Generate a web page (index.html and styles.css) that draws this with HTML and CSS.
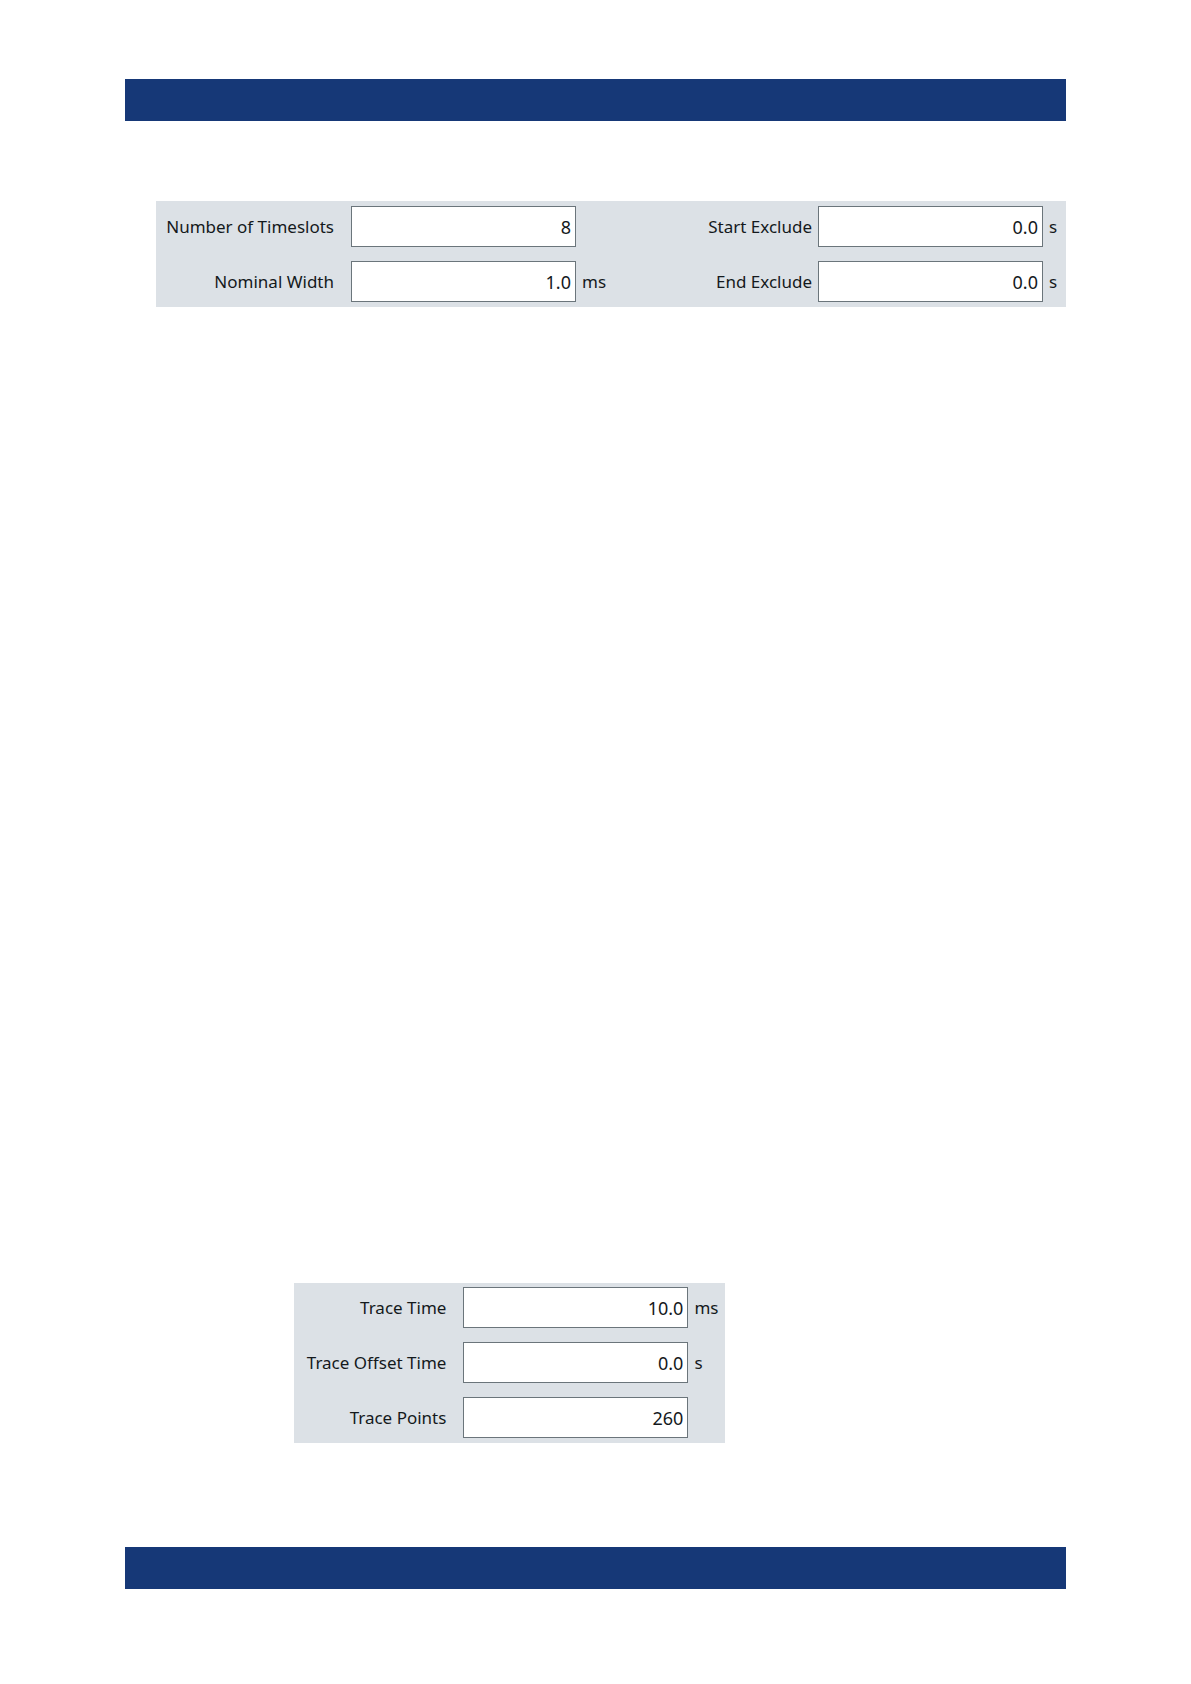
FILE: index.html
```html
<!DOCTYPE html>
<html lang="en">
<head>
    <meta charset="UTF-8">
    <meta name="viewport" content="width=device-width, initial-scale=1">
    <title>Trace Settings</title>
    <link rel="stylesheet" href="styles.css">
</head>
<body>
<header class="bar"></header>

<main class="content">
    <!-- Timeslot and exclude settings -->
    <form class="panel timeslot-panel">
        <div class="fields timeslot-fields">
            <label for="timeslots">Number of Timeslots</label>
            <input type="text" id="timeslots" value="8">
            <span class="unit"></span>

            <label for="nominalWidth">Nominal Width</label>
            <input type="text" id="nominalWidth" value="1.0">
            <span class="unit">ms</span>
        </div>
        <div class="fields exclude-fields">
            <label for="startExclude">Start Exclude</label>
            <input type="text" id="startExclude" value="0.0">
            <span class="unit">s</span>

            <label for="endExclude">End Exclude</label>
            <input type="text" id="endExclude" value="0.0">
            <span class="unit">s</span>
        </div>
    </form>

    <!-- Trace settings -->
    <form class="panel trace-panel">
        <div class="fields trace-fields">
            <label for="traceTime">Trace Time</label>
            <input type="text" id="traceTime" value="10.0">
            <span class="unit">ms</span>

            <label for="traceOffset">Trace Offset Time</label>
            <input type="text" id="traceOffset" value="0.0">
            <span class="unit">s</span>

            <label for="tracePoints">Trace Points</label>
            <input type="text" id="tracePoints" value="260">
            <span class="unit"></span>
        </div>
    </form>
</main>

<footer class="bar"></footer>
</body>
</html>
```
FILE: styles.css
```css
* {
    box-sizing: border-box;
}
body {
    display: flex;
    flex-direction: column;
    min-height: 100vh;
    margin: 0;
    padding: 79px 125px 95px;
    background-color: #ffffff;
    color: #14191c;
    font-family: "Noto Sans", sans-serif;
    font-size: 17px;
    line-height: 24px;
}
.bar {
    height: 42px;
    background-color: #163877;
}
.content {
    flex: 1;
    display: flex;
    flex-direction: column;
    justify-content: space-between;
    padding: 80px 0 104px;
}
.panel {
    display: flex;
    justify-content: space-between;
    padding: 5px;
    background-color: #dce1e6;
}
.timeslot-panel {
    margin-left: 31px;
}
.trace-panel {
    align-self: flex-start;
    margin-left: 18%;
    padding-top: 4px;
}
.fields {
    display: grid;
    row-gap: 14px;
    align-items: center;
}
.timeslot-fields {
    grid-template-columns: 190px 225px auto;
}
.exclude-fields {
    grid-template-columns: auto 225px 18px;
}
.trace-fields {
    grid-template-columns: 164px 225px 32px;
}
.fields label {
    padding-right: 17px;
    text-align: right;
    white-space: nowrap;
}
.exclude-fields label {
    padding-right: 6px;
}
.fields input {
    width: 100%;
    height: 41px;
    padding: 0 4px;
    border: 1px solid #6b757b;
    border-radius: 0;
    background-color: #ffffff;
    color: inherit;
    font: inherit;
    font-size: 18px;
    text-align: right;
}
.unit {
    padding-left: 6px;
}
```
